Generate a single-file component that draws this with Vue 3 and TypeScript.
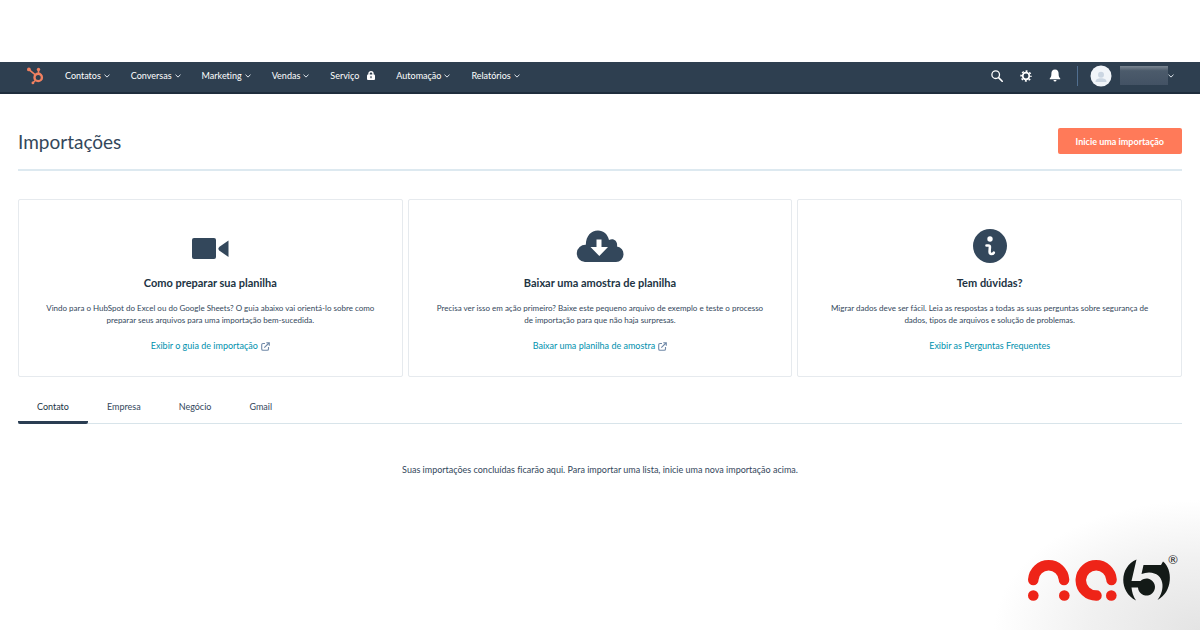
<script setup lang="ts">
import { ref } from 'vue'

interface MenuEntry { label: string; locked?: boolean }
interface HelpCard { icon: string; title: string; text: string; link: string; external: boolean }

const menu: MenuEntry[] = [
  { label: 'Contatos' },
  { label: 'Conversas' },
  { label: 'Marketing' },
  { label: 'Vendas' },
  { label: 'Serviço', locked: true },
  { label: 'Automação' },
  { label: 'Relatórios' },
]

const cards: HelpCard[] = [
  {
    icon: 'video',
    title: 'Como preparar sua planilha',
    text: 'Vindo para o HubSpot do Excel ou do Google Sheets? O guia abaixo vai orientá-lo sobre como preparar seus arquivos para uma importação bem-sucedida.',
    link: 'Exibir o guia de importação',
    external: true,
  },
  {
    icon: 'cloud',
    title: 'Baixar uma amostra de planilha',
    text: 'Precisa ver isso em ação primeiro? Baixe este pequeno arquivo de exemplo e teste o processo de importação para que não haja surpresas.',
    link: 'Baixar uma planilha de amostra',
    external: true,
  },
  {
    icon: 'info',
    title: 'Tem dúvidas?',
    text: 'Migrar dados deve ser fácil. Leia as respostas a todas as suas perguntas sobre segurança de dados, tipos de arquivos e solução de problemas.',
    link: 'Exibir as Perguntas Frequentes',
    external: false,
  },
]

const tabs: string[] = ['Contato', 'Empresa', 'Negócio', 'Gmail']
const activeTab = ref<string>('Contato')
</script>

<template>
  <div class="page">
    <header class="topbar">
      <a href="#" class="home" aria-label="HubSpot">
        <svg width="18" height="18" viewBox="0 0 18 18" fill="none" stroke="#f08060">
          <circle cx="11.2" cy="10.4" r="3.7" stroke-width="2.4" />
          <path d="M11.5 6V2.5M8.4 7.8L2 2.6M8.6 13.2L6 15.8" stroke-width="1.6" />
          <g fill="#f08060" stroke="none">
            <circle cx="11.5" cy="2.4" r="1.7" />
            <circle cx="1.9" cy="2.4" r="1.9" />
            <circle cx="5.9" cy="15.9" r="1.4" />
          </g>
        </svg>
      </a>
      <nav class="menu">
        <button v-for="m in menu" :key="m.label" type="button" :class="['menu-item', { locked: m.locked }]">
          {{ m.label }}
          <svg v-if="m.locked" width="8" height="9" viewBox="0 0 8 9">
            <path d="M2 4V2.7a2 2 0 0 1 4 0V4" fill="none" stroke="#fff" stroke-width="1.4" />
            <rect x="0" y="3.5" width="8" height="5.5" rx="1" fill="#fff" />
            <rect x="3.4" y="5.2" width="1.2" height="2" fill="#2e3f50" />
          </svg>
          <svg v-else width="6" height="4" viewBox="0 0 6 4" fill="none" stroke="#dfe5ec">
            <path d="M0.5 0.7L3 3.1L5.5 0.7" />
          </svg>
        </button>
      </nav>
      <div class="tools">
        <button type="button" class="tool" aria-label="Pesquisar">
          <svg width="12" height="12" viewBox="0 0 12 12" fill="none" stroke="#fff">
            <circle cx="4.7" cy="4.7" r="3.8" stroke-width="1.3" />
            <path d="M7.6 7.6L11.2 11.2" stroke-width="1.6" stroke-linecap="round" />
          </svg>
        </button>
        <button type="button" class="tool" aria-label="Configurações">
          <svg width="12" height="12" viewBox="0 0 12 12" fill="none" stroke="#fff">
            <circle cx="6" cy="6" r="3.3" stroke-width="1.7" />
            <circle cx="6" cy="6" r="4.9" stroke-width="1.6" stroke-dasharray="1.92 1.93" stroke-dashoffset="0.96" />
          </svg>
        </button>
        <button type="button" class="tool" aria-label="Notificações">
          <svg width="12" height="13" viewBox="0 0 12 13" fill="#fff">
            <path d="M6 0.6C3.4 0.6 2.4 2.5 2.4 4.5C2.4 7 2 8.2 0.8 9.3V10.2H11.2V9.3C10 8.2 9.6 7 9.6 4.5C9.6 2.5 8.6 0.6 6 0.6Z" />
            <path d="M4.5 10.9H7.5A1.5 1.5 0 0 1 4.5 10.9Z" />
          </svg>
        </button>
        <span class="divider"></span>
        <button type="button" class="account" aria-label="Conta">
          <svg width="22" height="22" viewBox="0 0 22 22">
            <circle cx="11" cy="11" r="10.5" fill="#f1f5f9" />
            <circle cx="11" cy="9.8" r="3" fill="#cbd6e2" />
            <path d="M5.5 17C5.5 14 8 13.3 11 13.3S16.5 14 16.5 17Z" fill="#cbd6e2" />
          </svg>
          <span class="masked-name"></span>
          <svg width="6" height="4" viewBox="0 0 6 4" fill="none" stroke="#dfe5ec">
            <path d="M0.5 0.7L3 3.1L5.5 0.7" />
          </svg>
        </button>
      </div>
    </header>

    <main class="content">
      <div class="heading">
        <h1>Importações</h1>
        <button type="button" class="primary">Inicie uma importação</button>
      </div>

      <section class="cards">
        <article v-for="c in cards" :key="c.title" class="card">
          <svg v-if="c.icon === 'video'" width="38" height="34" viewBox="0 0 38 34" fill="#33475b">
            <rect x="1" y="9" width="24" height="21" rx="2" />
            <path d="M37.5 11.5V28L28.500 21.700C27 20.500 27 19 28.500 17.800Z" />
          </svg>
          <svg v-else-if="c.icon === 'cloud'" width="48" height="34" viewBox="0 0 48 34">
            <path d="M9 33A8.6 8.6 0 0 1 9.8 15.8C10 7 15 1.5 22 1.5C27.500 1.500 31.500 5 33 11C37.500 8.500 42 12 41 17.500C45.500 18.500 47.500 21.500 47.500 25.300A7.500 7.500 0 0 1 40 33Z" fill="#33475b" />
            <path d="M20.500 10.500H25.500V18H32L23.300 27L14.500 18H20.500Z" fill="#fff" />
          </svg>
          <svg v-else width="34" height="34" viewBox="0 0 34 34">
            <circle cx="17" cy="17" r="17" fill="#33475b" />
            <circle cx="17" cy="10" r="2.700" fill="#fff" />
            <path d="M13.500 16.500H15.500Q17 16.500 16.900 18L16.600 22.500Q16.600 25 18.500 25Q20 25 20.800 23.700" fill="none" stroke="#fff" stroke-width="2.600" stroke-linecap="round" />
          </svg>
          <h2>{{ c.title }}</h2>
          <p>{{ c.text }}</p>
          <a href="#">
            {{ c.link }}
            <svg v-if="c.external" width="9" height="9" viewBox="0 0 9 9" fill="none" stroke="#7089a8">
              <path d="M4 1.500H2Q0.700 1.500 0.700 2.800V7Q0.700 8.300 2 8.300H6.200Q7.500 8.300 7.500 7V5M3.300 5.700L8 1M5.300 0.700H8.300V3.700" stroke-width="1.100" />
            </svg>
          </a>
        </article>
      </section>

      <div class="tabs" role="tablist">
        <button
          v-for="t in tabs"
          :key="t"
          type="button"
          role="tab"
          :aria-selected="t === activeTab"
          :class="['tab', { active: t === activeTab }]"
          @click="activeTab = t"
        >{{ t }}</button>
      </div>

      <p class="empty">Suas importações concluídas ficarão aqui. Para importar uma lista, inicie uma nova importação acima.</p>
    </main>

    <div class="brand">
      <svg width="150" height="46" viewBox="0 0 150 46" role="img" aria-label="na5">
        <g fill="none" stroke="#ee2418" stroke-width="10.500" stroke-linecap="round">
          <path d="M5.300 21V20.500A15.400 15.400 0 0 1 36 20.500V21" />
          <path d="M83.500 21V20.500A15.400 15.400 0 0 0 52.800 20.500V21.500A15.400 15.400 0 0 0 68.500 36.500" />
        </g>
        <g fill="#ee2418">
          <circle cx="5.300" cy="36.500" r="5.300" />
          <circle cx="36.300" cy="36.500" r="5.300" />
          <circle cx="83.300" cy="36.500" r="5.300" />
        </g>
        <g fill="#131a17">
          <path d="M108.500 0.500C91 8 91 33 108 41.500C105 37 104 33 103.500 28.500H110A8.500 8.500 0 1 0 112.500 22H103.500Z" />
          <path d="M115.500 6H133L135 2.500C145 10 145 33 129.500 41C137.500 31 137 14 121 13.500Q117 13.500 113.500 15Z" />
        </g>
      </svg>
      <span class="registered">®</span>
    </div>
  </div>
</template>

<style>
body { margin: 0; background: #fff; }
</style>

<style scoped>
.page {
  position: relative;
  box-sizing: border-box;
  min-height: 100vh;
  padding-top: 62px;
  font-family: Lato, "Open Sans", sans-serif;
  font-variant-ligatures: none;
  color: #33475b;
}
button { font: inherit; font-variant-ligatures: none; color: inherit; background: none; border: 0; padding: 0; }
svg { display: block; flex: none; }
.topbar {
  display: flex;
  align-items: center;
  box-sizing: border-box;
  height: 32px;
  padding: 0 26px 3px 27px;
  background: #2e3f50;
  border-bottom: 2px solid #1f2d3d;
}
.home { width: 38px; }
.menu { display: flex; gap: 21px; }
.menu-item { display: flex; align-items: center; gap: 3px; font-size: 9px; line-height: 12px; color: #fff; }
.menu-item.locked { gap: 8px; }
.tools { display: flex; align-items: center; margin-left: auto; gap: 17px; }
.divider { width: 1px; height: 20px; background: #516f90; margin: 0 -5px 0 -1px; }
.account { display: flex; align-items: center; }
.masked-name { width: 48px; height: 19px; margin-left: 8px; background: linear-gradient(#7b8793, #4c5b6b 25%, #435264); }
.content { padding: 34px 18px 0; }
.heading {
  display: flex;
  align-items: center;
  justify-content: space-between;
  padding-bottom: 15px;
  border-bottom: 2px solid #dde9f0;
}
h1 { margin: 0; padding-top: 1px; font-size: 19px; line-height: 25px; font-weight: 400; }
.primary {
  height: 26px;
  padding: 0 18px;
  border-radius: 2px;
  background: #ff7a59;
  color: #fff;
  font-size: 9px;
  font-weight: 700;
}
.cards { display: grid; grid-template-columns: repeat(3, 1fr); gap: 5px; margin-top: 28px; }
.card {
  display: flex;
  flex-direction: column;
  align-items: center;
  padding: 29px 24px 24px;
  border: 1px solid #e6eaee;
  border-radius: 2px;
  text-align: center;
}
h2 { margin: 12px 0 0; font-size: 11px; line-height: 16px; font-weight: 700; color: #213343; }
.card p { margin: 11px 0 0; font-size: 8px; line-height: 12px; }
.card a { display: flex; align-items: center; gap: 3px; margin-top: 14px; font-size: 9px; line-height: 12px; color: #0091ae; text-decoration: none; }
.tabs { display: flex; margin-top: 14px; border-bottom: 1px solid #d8e4ea; }
.tab { height: 33px; padding: 0 19px; margin-bottom: -1px; border-bottom: 3px solid transparent; font-size: 9px; }
.tab.active { border-bottom-color: #2a3d52; border-radius: 2px; color: #213343; }
.empty { margin: 39px 0 0; text-align: center; font-size: 9px; line-height: 14px; }
.brand {
  position: absolute;
  right: 0;
  bottom: 0;
  display: flex;
  align-items: flex-start;
  box-sizing: border-box;
  width: 206px;
  height: 130px;
  padding: 59px 0 0 34px;
  background: radial-gradient(farthest-side at 100% 100%, #e4e4e4, #f1f1f1 55%, #fff);
}
.registered { margin: -6px 0 0 -10px; font-size: 12px; line-height: 14px; color: #222; }
</style>
